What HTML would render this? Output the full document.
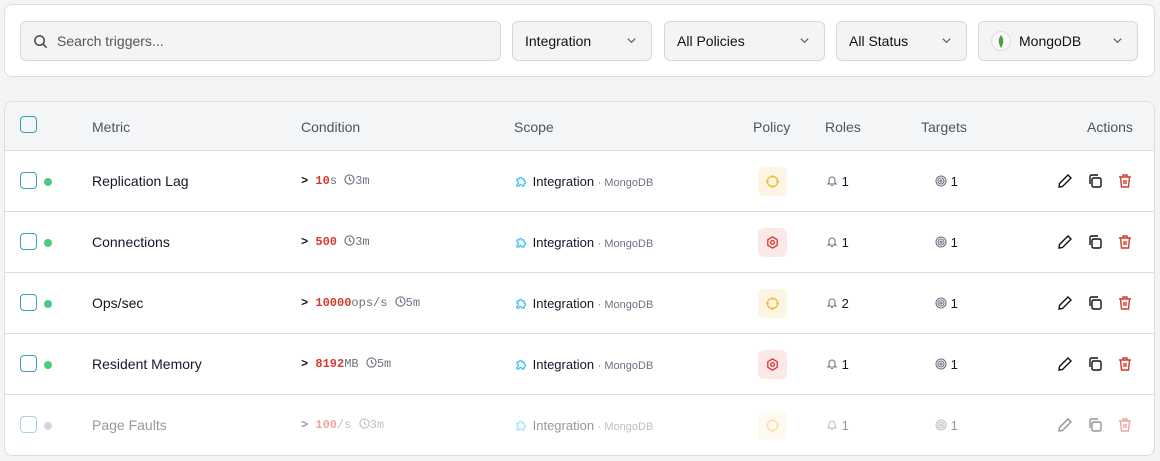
<!DOCTYPE html><html><head><meta charset="utf-8"><style>
*{box-sizing:border-box;margin:0;padding:0}
body{width:1160px;height:461px;background:#f4f4f5;font-family:"Liberation Sans",sans-serif;position:relative;overflow:hidden;color:#111827}
.card{position:absolute;left:4px;width:1151px;background:#fff;border:1px solid #dcdde1;border-radius:8px}
.sel{position:absolute;top:16px;height:40px;background:#f4f4f6;border:1px solid #d7d8dc;border-radius:6px;font-size:14px;color:#111;line-height:38px;padding-left:12px}
.sel .chev{position:absolute;right:14px;top:13px}
.hdr{position:absolute;left:0;top:0;width:100%;height:49px;background:#f4f5f7;border-bottom:1px solid #dcdde1;border-radius:8px 8px 0 0;font-size:14px;color:#4b5563}
.row{position:absolute;left:0;width:100%;height:61px;border-bottom:1px solid #dcdde1;font-size:14px}
.a{position:absolute}
.cb{position:absolute;left:15px;width:17px;height:17px;border:1.5px solid #3b9cc1;border-radius:4px}
.dot{position:absolute;left:39px;width:8px;height:8px;border-radius:50%;background:#4cc985}
.mono{font-family:"Liberation Mono",monospace;font-size:12px}
.red{color:#d43a2f}
.gray{color:#6b7280}
.pol{position:absolute;left:753px;top:16px;width:29px;height:29px;border-radius:6px}
.pol svg{position:absolute;left:7px;top:7px}
.faded > *{opacity:.45}
.ic{position:absolute;top:22px}
</style></head><body>
<div class="card" style="top:4px;height:73px">
 <div class="sel" style="left:15px;width:481px;color:#555;padding-left:36px"><svg style="position:absolute;left:12px;top:12px" width="15" height="15" viewBox="0 0 16 16" fill="none" stroke="#444" stroke-width="1.6"><circle cx="7" cy="7" r="5"/><path d="M11 11l3.5 3.5"/></svg>Search triggers...</div>
 <div class="sel" style="left:507px;width:140px">Integration<svg class="chev" width="11" height="11" viewBox="0 0 12 12" fill="none" stroke="#666" stroke-width="1.4"><path d="M2 4l4 4 4-4"/></svg></div>
 <div class="sel" style="left:659px;width:161px">All Policies<svg class="chev" width="11" height="11" viewBox="0 0 12 12" fill="none" stroke="#666" stroke-width="1.4"><path d="M2 4l4 4 4-4"/></svg></div>
 <div class="sel" style="left:831px;width:131px">All Status<svg class="chev" width="11" height="11" viewBox="0 0 12 12" fill="none" stroke="#666" stroke-width="1.4"><path d="M2 4l4 4 4-4"/></svg></div>
 <div class="sel" style="left:973px;width:160px;padding-left:40px"><span style="position:absolute;left:12px;top:9px;width:20px;height:20px;border-radius:50%;border:1px solid #ddd;background:#f8f8f8"><svg style="position:absolute;left:5px;top:3px" width="8" height="13" viewBox="0 0 8 13"><path d="M4 0C1 4 1 8 4 13C7 8 7 4 4 0Z" fill="#4aa03f"/></svg></span>MongoDB<svg class="chev" width="11" height="11" viewBox="0 0 12 12" fill="none" stroke="#666" stroke-width="1.4"><path d="M2 4l4 4 4-4"/></svg></div>
</div>
<div class="card" style="top:101px;height:355px;overflow:hidden">
 <div class="hdr">
  <div class="cb" style="top:14px"></div>
  <div class="a" style="left:87px;top:17px">Metric</div>
  <div class="a" style="left:296px;top:17px">Condition</div>
  <div class="a" style="left:509px;top:17px">Scope</div>
  <div class="a" style="left:748px;top:17px">Policy</div>
  <div class="a" style="left:820px;top:17px">Roles</div>
  <div class="a" style="left:916px;top:17px">Targets</div>
  <div class="a" style="left:1082px;top:17px">Actions</div>
 </div>

 <div class="row" style="top:49px">
  <div class="cb" style="top:21px"></div><div class="dot" style="top:27px"></div>
  <div class="a" style="left:87px;top:22px">Replication Lag</div>
  <div class="a mono" style="left:296px;top:23px"><b>&gt;</b> <b class="red">10</b><span class="gray">s</span> <svg width="11" height="11" viewBox="0 0 12 12" fill="none" stroke="#6b7280" stroke-width="1.3" style="vertical-align:-1px"><circle cx="6" cy="6" r="5"/><path d="M6 3v3l2 1.5"/></svg><span class="gray">3m</span></div>
  <div class="a" style="left:510px;top:23px;font-size:13px"><svg width="14" height="14" viewBox="0 0 14 14" fill="none" stroke="#38bdf8" stroke-width="1.2" style="vertical-align:-2px"><path d="M2 5h2a1.5 1.5 0 1 1 3 0h2v2a1.5 1.5 0 1 1 0 3v2H7a1.5 1.5 0 1 0-3 0H2V10a1.5 1.5 0 1 0 0-3z"/></svg> Integration <span class="gray" style="font-size:11px">· MongoDB</span></div>
  <div class="pol" style="background:#fdf5e4"><svg width="15" height="15" viewBox="0 0 16 16" fill="none" stroke="#f5b82e" stroke-width="1.4"><circle cx="8" cy="8" r="5.5"/><path d="M8 1v3M8 12v3M1 8h3M12 8h3"/></svg></div>
  <div class="a" style="left:821px;top:23px;font-size:13px"><svg width="12" height="12" viewBox="0 0 12 12" fill="none" stroke="#6b7280" stroke-width="1.1" style="vertical-align:-1px"><path d="M3 8V5a3 3 0 0 1 6 0v3l1 1H2zM5 10.5h2"/></svg> 1</div>
  <div class="a" style="left:930px;top:23px;font-size:13px"><svg width="12" height="12" viewBox="0 0 12 12" fill="none" stroke="#6b7280" stroke-width="1.1" style="vertical-align:-1px"><circle cx="6" cy="6" r="5"/><circle cx="6" cy="6" r="3"/><circle cx="6" cy="6" r="1"/></svg> 1</div>
  <svg class="ic" style="left:1052px" width="16" height="16" viewBox="0 0 16 16" fill="none" stroke="#111" stroke-width="1.4"><path d="M11 2l3 3-8.5 8.5L2 14l.5-3.5z"/></svg>
  <svg class="ic" style="left:1082px" width="16" height="16" viewBox="0 0 16 16" fill="none" stroke="#111" stroke-width="1.4"><rect x="5" y="5" width="9" height="9" rx="1.5"/><path d="M3 11V3.5A1.5 1.5 0 0 1 4.5 2H11"/></svg>
  <svg class="ic" style="left:1112px" width="16" height="16" viewBox="0 0 16 16" fill="none" stroke="#d43a2f" stroke-width="1.4"><path d="M2 4h12M6 4V2h4v2M3.5 4l1 10h7l1-10M7 7v4M9 7v4"/></svg>
 </div>

 <div class="row" style="top:110px">
  <div class="cb" style="top:21px"></div><div class="dot" style="top:27px"></div>
  <div class="a" style="left:87px;top:22px">Connections</div>
  <div class="a mono" style="left:296px;top:23px"><b>&gt;</b> <b class="red">500</b> <svg width="11" height="11" viewBox="0 0 12 12" fill="none" stroke="#6b7280" stroke-width="1.3" style="vertical-align:-1px"><circle cx="6" cy="6" r="5"/><path d="M6 3v3l2 1.5"/></svg><span class="gray">3m</span></div>
  <div class="a" style="left:510px;top:23px;font-size:13px"><svg width="14" height="14" viewBox="0 0 14 14" fill="none" stroke="#38bdf8" stroke-width="1.2" style="vertical-align:-2px"><path d="M2 5h2a1.5 1.5 0 1 1 3 0h2v2a1.5 1.5 0 1 1 0 3v2H7a1.5 1.5 0 1 0-3 0H2V10a1.5 1.5 0 1 0 0-3z"/></svg> Integration <span class="gray" style="font-size:11px">· MongoDB</span></div>
  <div class="pol" style="background:#fbe8e7"><svg width="15" height="15" viewBox="0 0 16 16" fill="none" stroke="#d43a2f" stroke-width="1.4"><path d="M8 2l5 3v6l-5 3-5-3V5z"/><circle cx="8" cy="8" r="2"/></svg></div>
  <div class="a" style="left:821px;top:23px;font-size:13px"><svg width="12" height="12" viewBox="0 0 12 12" fill="none" stroke="#6b7280" stroke-width="1.1" style="vertical-align:-1px"><path d="M3 8V5a3 3 0 0 1 6 0v3l1 1H2zM5 10.5h2"/></svg> 1</div>
  <div class="a" style="left:930px;top:23px;font-size:13px"><svg width="12" height="12" viewBox="0 0 12 12" fill="none" stroke="#6b7280" stroke-width="1.1" style="vertical-align:-1px"><circle cx="6" cy="6" r="5"/><circle cx="6" cy="6" r="3"/><circle cx="6" cy="6" r="1"/></svg> 1</div>
  <svg class="ic" style="left:1052px" width="16" height="16" viewBox="0 0 16 16" fill="none" stroke="#111" stroke-width="1.4"><path d="M11 2l3 3-8.5 8.5L2 14l.5-3.5z"/></svg>
  <svg class="ic" style="left:1082px" width="16" height="16" viewBox="0 0 16 16" fill="none" stroke="#111" stroke-width="1.4"><rect x="5" y="5" width="9" height="9" rx="1.5"/><path d="M3 11V3.5A1.5 1.5 0 0 1 4.5 2H11"/></svg>
  <svg class="ic" style="left:1112px" width="16" height="16" viewBox="0 0 16 16" fill="none" stroke="#d43a2f" stroke-width="1.4"><path d="M2 4h12M6 4V2h4v2M3.5 4l1 10h7l1-10M7 7v4M9 7v4"/></svg>
 </div>

 <div class="row" style="top:171px">
  <div class="cb" style="top:21px"></div><div class="dot" style="top:27px"></div>
  <div class="a" style="left:87px;top:22px">Ops/sec</div>
  <div class="a mono" style="left:296px;top:23px"><b>&gt;</b> <b class="red">10000</b><span class="gray">ops/s</span> <svg width="11" height="11" viewBox="0 0 12 12" fill="none" stroke="#6b7280" stroke-width="1.3" style="vertical-align:-1px"><circle cx="6" cy="6" r="5"/><path d="M6 3v3l2 1.5"/></svg><span class="gray">5m</span></div>
  <div class="a" style="left:510px;top:23px;font-size:13px"><svg width="14" height="14" viewBox="0 0 14 14" fill="none" stroke="#38bdf8" stroke-width="1.2" style="vertical-align:-2px"><path d="M2 5h2a1.5 1.5 0 1 1 3 0h2v2a1.5 1.5 0 1 1 0 3v2H7a1.5 1.5 0 1 0-3 0H2V10a1.5 1.5 0 1 0 0-3z"/></svg> Integration <span class="gray" style="font-size:11px">· MongoDB</span></div>
  <div class="pol" style="background:#fdf5e4"><svg width="15" height="15" viewBox="0 0 16 16" fill="none" stroke="#f5b82e" stroke-width="1.4"><circle cx="8" cy="8" r="5.5"/><path d="M8 1v3M8 12v3M1 8h3M12 8h3"/></svg></div>
  <div class="a" style="left:821px;top:23px;font-size:13px"><svg width="12" height="12" viewBox="0 0 12 12" fill="none" stroke="#6b7280" stroke-width="1.1" style="vertical-align:-1px"><path d="M3 8V5a3 3 0 0 1 6 0v3l1 1H2zM5 10.5h2"/></svg> 2</div>
  <div class="a" style="left:930px;top:23px;font-size:13px"><svg width="12" height="12" viewBox="0 0 12 12" fill="none" stroke="#6b7280" stroke-width="1.1" style="vertical-align:-1px"><circle cx="6" cy="6" r="5"/><circle cx="6" cy="6" r="3"/><circle cx="6" cy="6" r="1"/></svg> 1</div>
  <svg class="ic" style="left:1052px" width="16" height="16" viewBox="0 0 16 16" fill="none" stroke="#111" stroke-width="1.4"><path d="M11 2l3 3-8.5 8.5L2 14l.5-3.5z"/></svg>
  <svg class="ic" style="left:1082px" width="16" height="16" viewBox="0 0 16 16" fill="none" stroke="#111" stroke-width="1.4"><rect x="5" y="5" width="9" height="9" rx="1.5"/><path d="M3 11V3.5A1.5 1.5 0 0 1 4.5 2H11"/></svg>
  <svg class="ic" style="left:1112px" width="16" height="16" viewBox="0 0 16 16" fill="none" stroke="#d43a2f" stroke-width="1.4"><path d="M2 4h12M6 4V2h4v2M3.5 4l1 10h7l1-10M7 7v4M9 7v4"/></svg>
 </div>

 <div class="row" style="top:232px">
  <div class="cb" style="top:21px"></div><div class="dot" style="top:27px"></div>
  <div class="a" style="left:87px;top:22px">Resident Memory</div>
  <div class="a mono" style="left:296px;top:23px"><b>&gt;</b> <b class="red">8192</b><span class="gray">MB</span> <svg width="11" height="11" viewBox="0 0 12 12" fill="none" stroke="#6b7280" stroke-width="1.3" style="vertical-align:-1px"><circle cx="6" cy="6" r="5"/><path d="M6 3v3l2 1.5"/></svg><span class="gray">5m</span></div>
  <div class="a" style="left:510px;top:23px;font-size:13px"><svg width="14" height="14" viewBox="0 0 14 14" fill="none" stroke="#38bdf8" stroke-width="1.2" style="vertical-align:-2px"><path d="M2 5h2a1.5 1.5 0 1 1 3 0h2v2a1.5 1.5 0 1 1 0 3v2H7a1.5 1.5 0 1 0-3 0H2V10a1.5 1.5 0 1 0 0-3z"/></svg> Integration <span class="gray" style="font-size:11px">· MongoDB</span></div>
  <div class="pol" style="background:#fbe8e7"><svg width="15" height="15" viewBox="0 0 16 16" fill="none" stroke="#d43a2f" stroke-width="1.4"><path d="M8 2l5 3v6l-5 3-5-3V5z"/><circle cx="8" cy="8" r="2"/></svg></div>
  <div class="a" style="left:821px;top:23px;font-size:13px"><svg width="12" height="12" viewBox="0 0 12 12" fill="none" stroke="#6b7280" stroke-width="1.1" style="vertical-align:-1px"><path d="M3 8V5a3 3 0 0 1 6 0v3l1 1H2zM5 10.5h2"/></svg> 1</div>
  <div class="a" style="left:930px;top:23px;font-size:13px"><svg width="12" height="12" viewBox="0 0 12 12" fill="none" stroke="#6b7280" stroke-width="1.1" style="vertical-align:-1px"><circle cx="6" cy="6" r="5"/><circle cx="6" cy="6" r="3"/><circle cx="6" cy="6" r="1"/></svg> 1</div>
  <svg class="ic" style="left:1052px" width="16" height="16" viewBox="0 0 16 16" fill="none" stroke="#111" stroke-width="1.4"><path d="M11 2l3 3-8.5 8.5L2 14l.5-3.5z"/></svg>
  <svg class="ic" style="left:1082px" width="16" height="16" viewBox="0 0 16 16" fill="none" stroke="#111" stroke-width="1.4"><rect x="5" y="5" width="9" height="9" rx="1.5"/><path d="M3 11V3.5A1.5 1.5 0 0 1 4.5 2H11"/></svg>
  <svg class="ic" style="left:1112px" width="16" height="16" viewBox="0 0 16 16" fill="none" stroke="#d43a2f" stroke-width="1.4"><path d="M2 4h12M6 4V2h4v2M3.5 4l1 10h7l1-10M7 7v4M9 7v4"/></svg>
 </div>

 <div class="row faded" style="top:293px;border-bottom:none">
  <div class="cb" style="top:21px"></div><div class="dot" style="top:27px;background:#9ca3af"></div>
  <div class="a" style="left:87px;top:22px">Page Faults</div>
  <div class="a mono" style="left:296px;top:23px"><b>&gt;</b> <b class="red">100</b><span class="gray">/s</span> <svg width="11" height="11" viewBox="0 0 12 12" fill="none" stroke="#6b7280" stroke-width="1.3" style="vertical-align:-1px"><circle cx="6" cy="6" r="5"/><path d="M6 3v3l2 1.5"/></svg><span class="gray">3m</span></div>
  <div class="a" style="left:510px;top:23px;font-size:13px"><svg width="14" height="14" viewBox="0 0 14 14" fill="none" stroke="#38bdf8" stroke-width="1.2" style="vertical-align:-2px"><path d="M2 5h2a1.5 1.5 0 1 1 3 0h2v2a1.5 1.5 0 1 1 0 3v2H7a1.5 1.5 0 1 0-3 0H2V10a1.5 1.5 0 1 0 0-3z"/></svg> Integration <span class="gray" style="font-size:11px">· MongoDB</span></div>
  <div class="pol" style="background:#fdf5e4"><svg width="15" height="15" viewBox="0 0 16 16" fill="none" stroke="#f5b82e" stroke-width="1.4"><circle cx="8" cy="8" r="5.5"/><path d="M8 1v3M8 12v3M1 8h3M12 8h3"/></svg></div>
  <div class="a" style="left:821px;top:23px;font-size:13px"><svg width="12" height="12" viewBox="0 0 12 12" fill="none" stroke="#6b7280" stroke-width="1.1" style="vertical-align:-1px"><path d="M3 8V5a3 3 0 0 1 6 0v3l1 1H2zM5 10.5h2"/></svg> 1</div>
  <div class="a" style="left:930px;top:23px;font-size:13px"><svg width="12" height="12" viewBox="0 0 12 12" fill="none" stroke="#6b7280" stroke-width="1.1" style="vertical-align:-1px"><circle cx="6" cy="6" r="5"/><circle cx="6" cy="6" r="3"/><circle cx="6" cy="6" r="1"/></svg> 1</div>
  <svg class="ic" style="left:1052px" width="16" height="16" viewBox="0 0 16 16" fill="none" stroke="#111" stroke-width="1.4"><path d="M11 2l3 3-8.5 8.5L2 14l.5-3.5z"/></svg>
  <svg class="ic" style="left:1082px" width="16" height="16" viewBox="0 0 16 16" fill="none" stroke="#111" stroke-width="1.4"><rect x="5" y="5" width="9" height="9" rx="1.5"/><path d="M3 11V3.5A1.5 1.5 0 0 1 4.5 2H11"/></svg>
  <svg class="ic" style="left:1112px" width="16" height="16" viewBox="0 0 16 16" fill="none" stroke="#d43a2f" stroke-width="1.4"><path d="M2 4h12M6 4V2h4v2M3.5 4l1 10h7l1-10M7 7v4M9 7v4"/></svg>
 </div>
</div>
</body></html>
